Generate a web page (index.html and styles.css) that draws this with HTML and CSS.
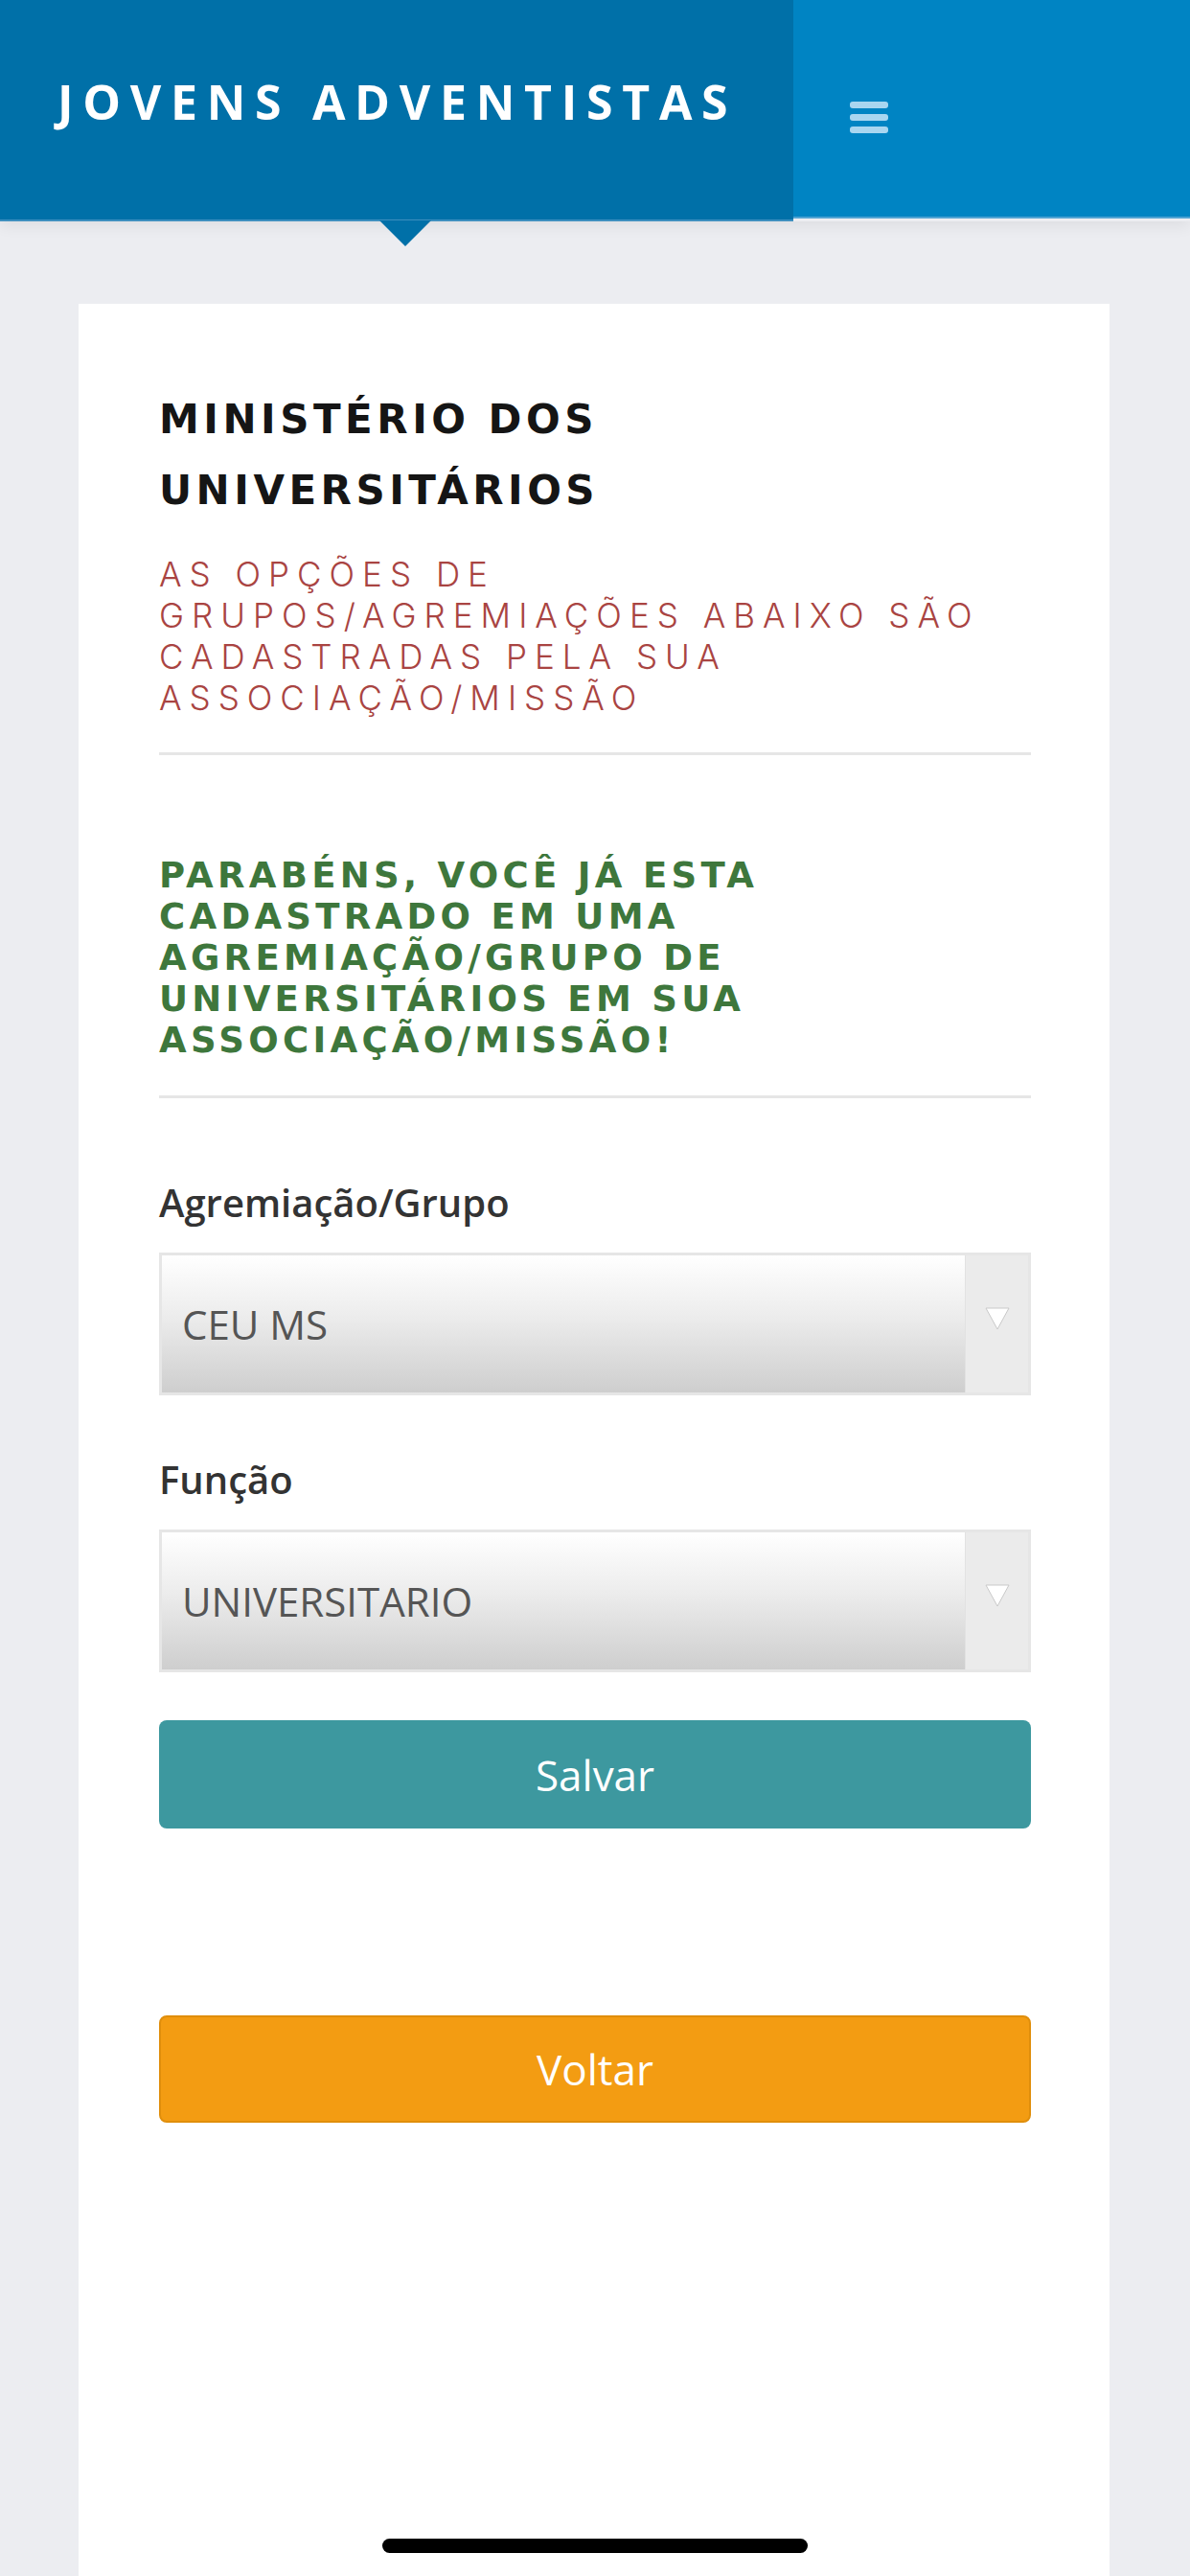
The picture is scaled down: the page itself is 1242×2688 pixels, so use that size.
FILE: index.html
```html
<!DOCTYPE html>
<html lang="pt-BR">

<head>
    <meta charset="UTF-8">
    <meta name="viewport" content="width=device-width, initial-scale=1.0">
    <title>Jovens Adventistas - Ministério dos Universitários</title>
    <link rel="stylesheet" href="styles.css">
</head>

<body>

    <header class="topbar">
        <div class="brand">
            <span class="brand-name">JOVENS ADVENTISTAS</span>
        </div>
        <div class="menu-area">
            <button class="menu-toggle" type="button" aria-label="Menu">
                <svg width="40" height="33" viewBox="0 0 40 33">
                    <rect x="0" y="0" width="40" height="7" rx="3" fill="#a9d6f0" />
                    <rect x="0" y="13" width="40" height="7" rx="3" fill="#a9d6f0" />
                    <rect x="0" y="26" width="40" height="7" rx="3" fill="#a9d6f0" />
                </svg>
            </button>
        </div>
    </header>

    <main class="page">
        <section class="card">
            <h2 class="card-title">MINISTÉRIO DOS<br>UNIVERSITÁRIOS</h2>
            <p class="notice">AS OPÇÕES DE<br>GRUPOS/AGREMIAÇÕES ABAIXO SÃO<br>CADASTRADAS PELA SUA<br>ASSOCIAÇÃO/MISSÃO</p>
            <hr class="divider">

            <p class="success">PARABÉNS, VOCÊ JÁ ESTA<br>CADASTRADO EM UMA<br>AGREMIAÇÃO/GRUPO DE<br>UNIVERSITÁRIOS EM SUA<br>ASSOCIAÇÃO/MISSÃO!</p>
            <hr class="divider">

            <form class="group-form">
                <label class="field-label" for="grupo">Agremiação/Grupo</label>
                <div class="select-box">
                    <select id="grupo" class="select-input">
                        <option>CEU MS</option>
                    </select>
                    <span class="select-arrow">
                        <svg width="26" height="24" viewBox="0 0 26 24">
                            <polygon points="1,1 25,1 13,23" fill="#ffffff" stroke="#c9c9c9" stroke-width="1" />
                        </svg>
                    </span>
                </div>

                <label class="field-label" for="funcao">Função</label>
                <div class="select-box">
                    <select id="funcao" class="select-input">
                        <option>UNIVERSITARIO</option>
                    </select>
                    <span class="select-arrow">
                        <svg width="26" height="24" viewBox="0 0 26 24">
                            <polygon points="1,1 25,1 13,23" fill="#ffffff" stroke="#c9c9c9" stroke-width="1" />
                        </svg>
                    </span>
                </div>

                <button type="submit" class="btn btn-save">Salvar</button>
                <button type="button" class="btn btn-back">Voltar</button>
            </form>
        </section>
    </main>

    <div class="home-indicator"></div>

</body>

</html>
```

FILE: styles.css
```css
body {
    margin: 0;
    background-color: #ecedf1;
    font-family: 'Open Sans', sans-serif;
    color: #333;
}

.topbar {
    display: flex;
    align-items: flex-start;
    position: relative;
    z-index: 2;
    box-shadow: 0 6px 14px rgba(0, 0, 0, 0.06);
}

.brand {
    position: relative;
    width: 828px;
    height: 231px;
    background-color: #0070a8;
    border-bottom: 2px solid #3d8fbf;
    box-sizing: border-box;
}

.brand::after {
    content: "";
    position: absolute;
    left: 396px;
    bottom: -28px;
    border-left: 27px solid transparent;
    border-right: 27px solid transparent;
    border-top: 27px solid #0070a8;
}

.brand-name {
    display: block;
    padding: 72px 0 0 60px;
    font-size: 50px;
    line-height: 68px;
    font-weight: 700;
    letter-spacing: 9.7px;
    color: #ffffff;
}

.menu-area {
    flex: 1;
    height: 228px;
    background-color: #0084c3;
    border-bottom: 2px solid #4fa3d3;
    box-sizing: border-box;
    padding: 106px 0 0 59px;
}

.menu-toggle {
    display: block;
    padding: 0;
    border: none;
    background: none;
    line-height: 0;
    cursor: pointer;
}

.page {
    padding: 86px 84px 0 82px;
}

.card {
    background-color: #ffffff;
    min-height: calc(100vh - 317px);
    padding: 84px 82px 0 84px;
    box-sizing: border-box;
}

.card-title {
    margin: 0;
    font-family: 'DejaVu Sans', sans-serif;
    font-size: 42px;
    line-height: 74px;
    font-weight: 700;
    letter-spacing: 4.5px;
    color: #151515;
}

.notice {
    margin: 29px 0 0;
    font-family: 'Inter', sans-serif;
    font-size: 35px;
    line-height: 43px;
    font-weight: 300;
    letter-spacing: 8px;
    color: #a94442;
}

.divider {
    margin: 35px 0 0;
    border: none;
    border-top: 3px solid #e6e6e6;
}

.success {
    margin: 104px 0 0;
    font-family: 'DejaVu Sans', sans-serif;
    font-size: 37px;
    line-height: 43px;
    font-weight: 700;
    letter-spacing: 4.3px;
    color: #3e773c;
}

.success + .divider {
    margin-top: 36px;
}

.group-form {
    display: flex;
    flex-direction: column;
    padding-top: 81px;
}

.field-label {
    font-size: 40px;
    line-height: 56px;
    font-weight: 600;
    color: #333;
}

.select-box {
    display: flex;
    height: 149px;
    margin: 24px 0 60px;
    border: 3px solid #e6e6e6;
    box-sizing: border-box;
    background-color: #ebebeb;
}

.select-box:last-of-type {
    margin-bottom: 50px;
}

.select-input {
    flex: 1;
    margin: 0;
    padding: 0 0 0 21px;
    border: none;
    border-right: 1px solid #e2e2e2;
    border-radius: 0;
    -webkit-appearance: none;
    appearance: none;
    background: linear-gradient(#ffffff, #ececec 45%, #cecece);
    font-family: 'Open Sans', sans-serif;
    font-size: 42px;
    color: #555;
    outline: none;
}

.select-arrow {
    width: 65px;
    display: flex;
    justify-content: center;
    padding-top: 54px;
    box-sizing: border-box;
}

.btn {
    width: 100%;
    border-radius: 8px;
    font-family: 'Open Sans', sans-serif;
    font-size: 44px;
    color: #ffffff;
    cursor: pointer;
}

.btn-save {
    height: 113px;
    border: none;
    background-color: #3d989f;
}

.btn-back {
    height: 112px;
    margin-top: 195px;
    border: 2px solid #e08e0b;
    background-color: #f39c12;
}

.home-indicator {
    position: fixed;
    left: 399px;
    bottom: 24px;
    width: 444px;
    height: 15px;
    border-radius: 8px;
    background-color: #000000;
}
```
